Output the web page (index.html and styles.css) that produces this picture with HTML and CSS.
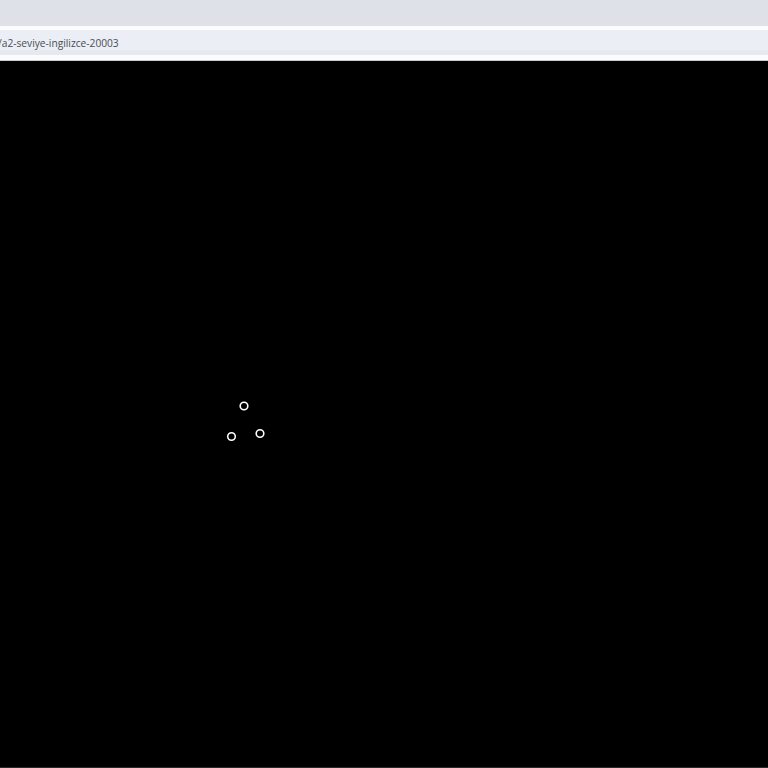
FILE: index.html
```html
<!DOCTYPE html>
<html>
<head>
<meta charset="utf-8">
<link rel="stylesheet" href="styles.css">
</head>
<body>
<div class="tabbar"></div>
<div class="gap"></div>
<div class="address">
  <span class="url">/a2-seviye-ingilizce-20003</span>
</div>
<div class="band"></div>
<div class="sep"></div>
<main class="screen">
  <div class="spinner">
    <svg width="768" height="706" viewBox="0 61 768 706">
      <circle cx="244" cy="406" r="3.8" fill="none" stroke="#fff" stroke-width="1.6"/>
      <circle cx="231.5" cy="436.5" r="3.8" fill="none" stroke="#fff" stroke-width="1.6"/>
      <circle cx="260" cy="433.5" r="3.8" fill="none" stroke="#fff" stroke-width="1.6"/>
    </svg>
  </div>
</main>
<div class="bottom"></div>
</body>
</html>
```

FILE: styles.css
```css
html, body {
  margin: 0;
  padding: 0;
  width: 768px;
  height: 768px;
  overflow: hidden;
  background: #000;
}
.tabbar {
  height: 26px;
  background: #dee1e7;
}
.gap {
  height: 4px;
  background: #fbfcfd;
}
.address {
  height: 20px;
  background: #ebeef5;
  display: flex;
  align-items: center;
}
.url {
  font-family: "Open Sans", "Noto Sans", "DejaVu Sans", sans-serif;
  font-size: 10.2px;
  color: #4a4d52;
  margin-left: -2px;
  margin-top: 6px;
  white-space: nowrap;
}
.band {
  height: 5px;
  background: #e6e9f0;
}
.sep {
  height: 5px;
  background: #fcfcfd;
  border-bottom: 1px solid #c8cacd;
}
.screen {
  height: 706px;
  background: #000;
}
.spinner svg {
  display: block;
}
.bottom {
  height: 1px;
  background: #2a2a2a;
}
```
